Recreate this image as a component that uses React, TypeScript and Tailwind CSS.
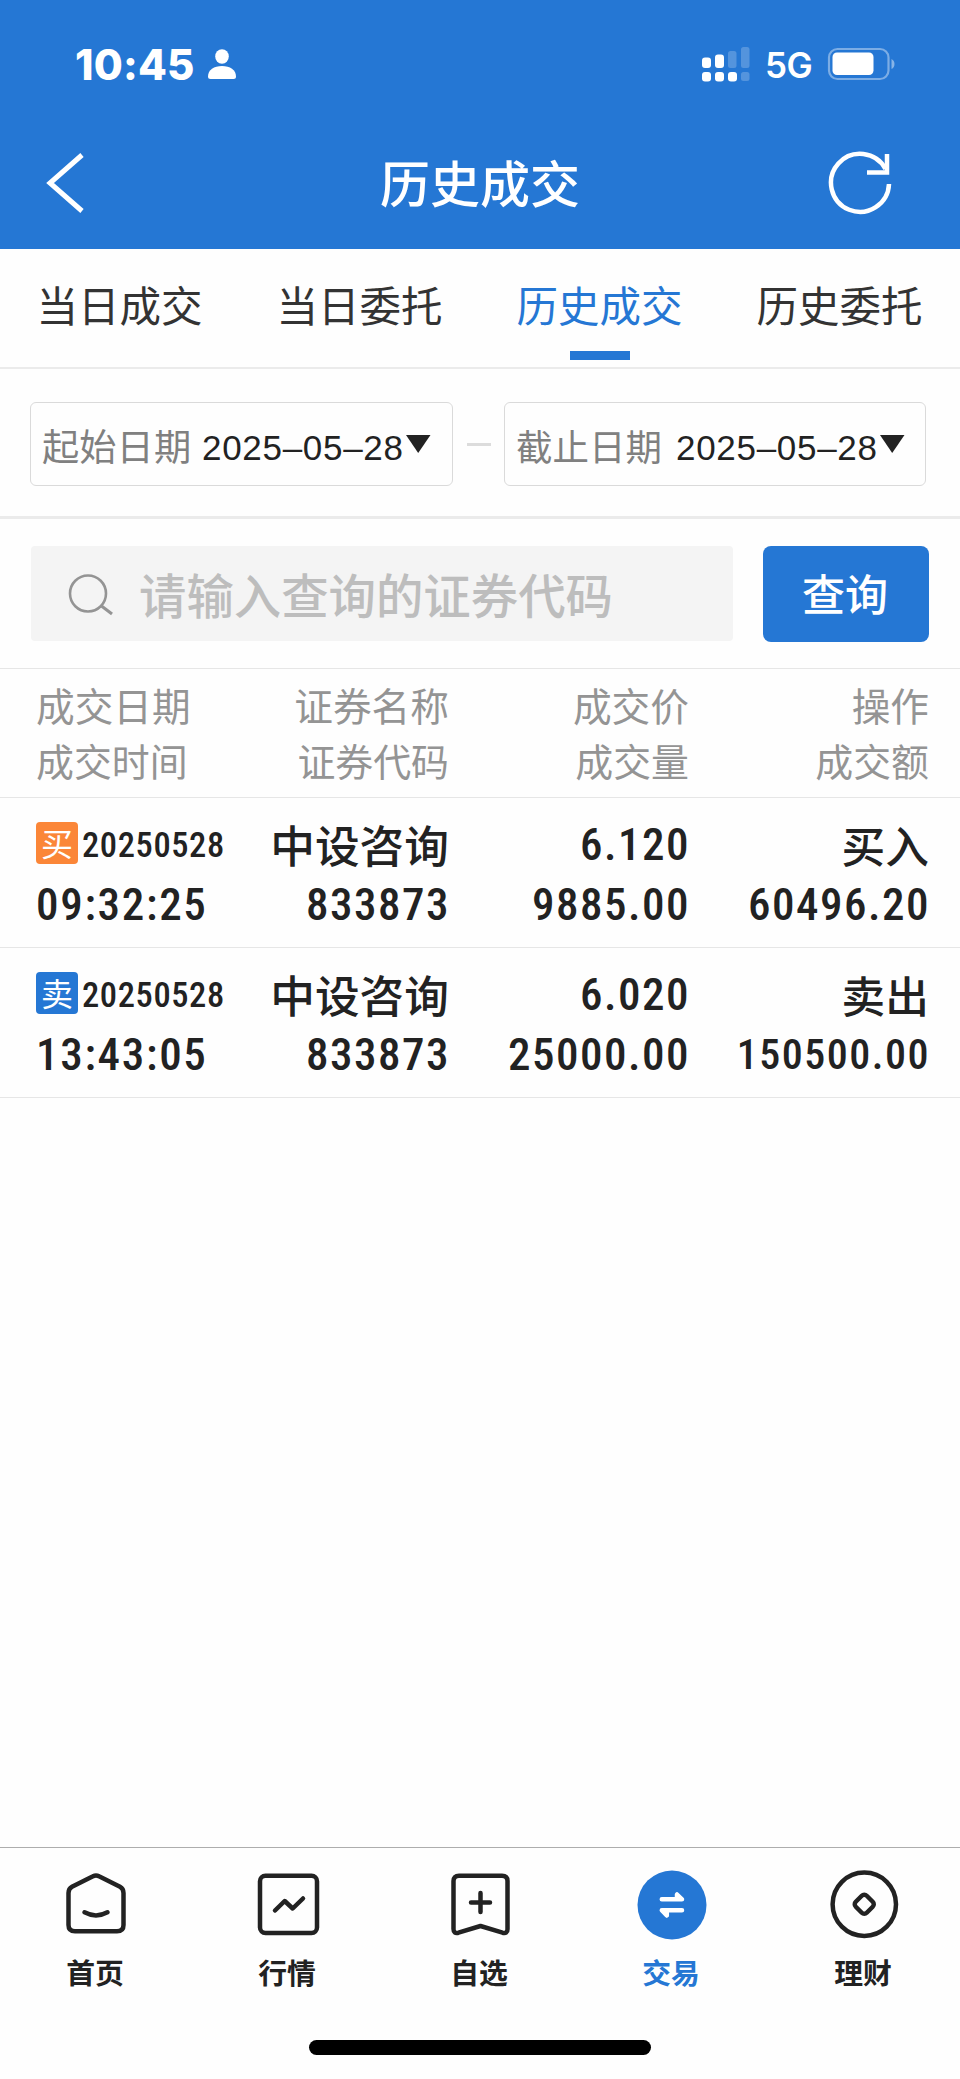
import React, { useState } from 'react';

const tabs = ['当日成交', '当日委托', '历史成交', '历史委托'];

const trades = [
  { side: 'buy', date: '20250528', time: '09:32:25', name: '中设咨询', code: '833873', price: '6.120', volume: '9885.00', amount: '60496.20' },
  { side: 'sell', date: '20250528', time: '13:43:05', name: '中设咨询', code: '833873', price: '6.020', volume: '25000.00', amount: '150500.00' },
];

const StatusBar = () => (
  <div className="h-[128px] flex items-center justify-between pl-[75px] pr-[64px]">
    <div className="flex items-center">
      <span className="w-[132px] mt-[1px] font-['Inter'] font-extrabold text-[42px] leading-none tracking-[0.2px]">10:45</span>
      <svg width="30" height="32" viewBox="0 0 30 32" fill="currentColor">
        <ellipse cx="15" cy="8.500" rx="6.800" ry="7.300" />
        <path d="M1 28.500C1 22 7 18 15 18s14 4 14 10.500Q29 31 26.500 31H3.500Q1 31 1 28.500Z" />
      </svg>
    </div>
    <div className="flex items-center">
      <svg width="50" height="36" viewBox="0 0 50 36" fill="currentColor">
        <rect x="1" y="11.500" width="9" height="10.500" rx="3" />
        <rect x="14" y="8.500" width="9" height="13.500" rx="3" />
        <rect x="27" y="5" width="8.500" height="17" rx="2.500" opacity=".22" />
        <rect x="40" y="1" width="8.500" height="21" rx="2.500" opacity=".22" />
        <rect x="1" y="26" width="9" height="9.500" rx="3" />
        <rect x="14" y="26" width="9" height="9.500" rx="3" />
        <rect x="27" y="26" width="9" height="9.500" rx="3" />
        <rect x="40" y="26" width="8.500" height="9" rx="2.500" opacity=".22" />
      </svg>
      <span className="ml-[14px] mt-[2px] w-[47px] font-['Inter'] font-semibold text-[35px] leading-none tracking-[-0.5px]">5G</span>
      <svg className="ml-[15px]" width="69" height="34" viewBox="0 0 69 34" fill="none">
        <rect x="2" y="2" width="59.500" height="30" rx="8.500" stroke="white" strokeOpacity=".4" strokeWidth="2.200" />
        <rect x="5.500" y="5.500" width="41" height="22.500" rx="4.500" fill="white" />
        <path d="M64.500 12q3 1.500 3 5t-3 5Z" fill="white" fillOpacity=".45" />
      </svg>
    </div>
  </div>
);

const NavBar = () => (
  <div className="h-[121px] grid grid-cols-3 items-start px-[44px]">
    <button className="mt-[24px] justify-self-start">
      <svg width="44" height="62" viewBox="0 0 44 62" fill="none" stroke="currentColor" strokeWidth="5">
        <path d="M38 3L6 31L38 59" />
      </svg>
    </button>
    <h1 className="mt-[19px] text-center font-medium text-[50px] leading-[68px]">历史成交</h1>
    <button className="mt-[21px] mr-[23px] justify-self-end">
      <svg width="68" height="68" viewBox="0 0 68 68" fill="none" stroke="currentColor" strokeWidth="4.500">
        <path d="M64 35A29 29 0 1 1 60.500 20" />
        <path d="M62 5V23.500H42" />
      </svg>
    </button>
  </div>
);

const DateField = ({ label, labelClass, value }: any) => (
  <button className="h-[84px] rounded-[6px] border border-[#dadada] flex items-center pl-[11px] whitespace-nowrap">
    <span className={labelClass}>{label}</span>
    <span className="mt-[7px] font-['Liberation_Sans',sans-serif] text-[35px] leading-none tracking-[0.7px] text-[#222]">{value}</span>
    <svg className="ml-[2px] -mt-[1px]" width="25" height="18" viewBox="0 0 25 18"><path d="M0 0H24.500L12.200 18Z" fill="#222" /></svg>
  </button>
);

const SearchRow = () => (
  <div className="h-[150px] border-b border-[#e6e6e6] flex items-start pt-[27px] pl-[31px] pr-[31px]">
    <div className="w-[702px] h-[95px] bg-[#f4f4f4] rounded-[4px] flex items-center pl-[37px]">
      <svg className="shrink-0 mt-[2px]" width="46" height="44" viewBox="0 0 46 44" fill="none" stroke="#949494" strokeWidth="2.600">
        <circle cx="20" cy="20.500" r="18" />
        <path d="M33.500 33L44 41" strokeWidth="3" />
      </svg>
      <input
        className="ml-[25px] w-[560px] h-[80px] bg-transparent outline-none font-medium text-[47.400px] text-[#333] placeholder:text-[#bdbdbd] placeholder:opacity-100"
        placeholder="请输入查询的证券代码"
      />
    </div>
    <button className="ml-[30px] w-[166px] h-[96px] pb-[3px] pr-[2px] rounded-[8px] bg-[#2577d4] text-white font-medium text-[43px] leading-none">查询</button>
  </div>
);

const TableHead = () => (
  <div className="h-[129px] border-b border-[#e6e6e6] pt-[8px] pl-[36px] pr-[31px] text-[#949494]">
    <div className="grid grid-cols-[190px_223px_240px_240px] text-right text-[38.700px] leading-[55px]">
      <span className="text-left">成交日期</span>
      <span>证券名称</span>
      <span>成交价</span>
      <span>操作</span>
    </div>
    <div className="grid grid-cols-[190px_223px_240px_240px] text-right text-[37.900px] leading-[55px]">
      <span className="text-left">成交时间</span>
      <span>证券代码</span>
      <span>成交量</span>
      <span>成交额</span>
    </div>
  </div>
);

const TradeRow = ({ trade }: any) => {
  const buy = trade.side === 'buy';
  return (
    <div className="h-[150px] border-b border-[#e6e6e6] pt-[17px] pl-[36px] pr-[31px] text-[#222] font-medium">
      <div className="grid grid-cols-[190px_223px_240px_240px] h-[60px] text-right leading-[60px]">
        <div className="flex items-center gap-[4px]">
          <span className={`shrink-0 w-[42px] h-[42px] -mt-[4px] pb-[2px] rounded-[4px] flex items-center justify-center text-white font-normal text-[32px] leading-none ${buy ? 'bg-[#fb8638]' : 'bg-[#2577d4]'}`}>
            {buy ? '买' : '卖'}
          </span>
          <span className="font-['Roboto'] [font-stretch:75%] text-[34.500px] tracking-[0.600px]">{trade.date}</span>
        </div>
        <span className="text-[44.700px] -mt-[1px]">{trade.name}</span>
        <span className="font-['Roboto'] [font-stretch:75%] text-[45px] tracking-[1.500px] -mr-[1px]">{trade.price}</span>
        <span className="text-[43.700px] -mt-[1px]">{buy ? '买入' : '卖出'}</span>
      </div>
      <div className="grid grid-cols-[190px_223px_240px_240px] h-[60px] text-right leading-[60px] font-['Roboto'] [font-stretch:75%] text-[45px] tracking-[1.500px]">
        <span className="text-left tracking-[1.700px]">{trade.time}</span>
        <span className="-mr-[1px]">{trade.code}</span>
        <span className="-mr-[1px]">{trade.volume}</span>
        <span className={trade.amount.length > 8 ? '-mr-[1px] text-[42px]' : '-mr-[1px]'}>{trade.amount}</span>
      </div>
    </div>
  );
};

const navItems = [
  {
    label: '首页',
    icon: (
      <>
        <path d="M8.500 24Q8.500 19.500 12 17.700L33 7.200Q36 5.600 39 7.200L60 17.700Q63.500 19.500 63.500 24V56Q63.500 62.300 57 62.300H15Q8.500 62.300 8.500 56Z" />
        <path d="M24.500 43.300Q36 49.500 47.500 43.300" />
      </>
    ),
  },
  {
    label: '行情',
    icon: (
      <>
        <rect x="8" y="6.700" width="57" height="57.300" rx="5.500" />
        <path d="M23 41.500L32.700 32L40.700 39.500L51 29.500" />
      </>
    ),
  },
  {
    label: '自选',
    icon: (
      <>
        <path d="M9.500 12Q9.500 6.700 15 6.700H58Q63.500 6.700 63.500 12V60Q63.500 65 58.500 63.700L36.500 57L14.500 63.700Q9.500 65 9.500 60Z" />
        <path d="M27 33.500H46M36.500 24V43" />
      </>
    ),
  },
  {
    label: '交易',
    active: true,
    icon: (
      <>
        <circle cx="36" cy="36" r="34.500" fill="#2577d4" stroke="none" />
        <path d="M25.800 30.300H46L41 25.500V30" stroke="white" fill="white" />
        <path d="M46 41.300H25.800L30.800 46.500V41.600" stroke="white" fill="white" />
      </>
    ),
  },
  {
    label: '理财',
    icon: (
      <>
        <circle cx="36.300" cy="35.300" r="31.700" />
        <rect x="28.500" y="27.500" width="15.500" height="15.500" rx="3.500" transform="rotate(45 36.250 35.250)" />
      </>
    ),
  },
];

const BottomNav = () => (
  <div className="h-[232px] border-t border-[#adadad] flex flex-col items-center">
    <div className="w-full grid grid-cols-5 pt-[21px]">
      {navItems.map(item => (
        <button key={item.label} className={`flex flex-col items-center ${item.active ? 'text-[#2577d4]' : 'text-[#222]'}`}>
          <svg width="72" height="72" viewBox="0 0 72 72" fill="none" stroke="currentColor" strokeWidth="4.500" strokeLinecap="round" strokeLinejoin="round">
            {item.icon}
          </svg>
          <span className="mt-[11px] pr-[2px] font-bold text-[28.800px] leading-[40px]">{item.label}</span>
        </button>
      ))}
    </div>
    <div className="mt-[48px] w-[342px] h-[15px] rounded-full bg-black" />
  </div>
);

export default function App() {
  const [active, setActive] = useState(2);

  return (
    <div className="w-[960px] h-[2079px] flex flex-col bg-[#fefefe] font-['Noto_Sans_CJK_SC',sans-serif] overflow-hidden">
      <header className="h-[249px] bg-[#2577d4] text-white">
        <StatusBar />
        <NavBar />
      </header>

      <div className="h-[120px] grid grid-cols-4 border-b-2 border-[#ebebeb]">
        {tabs.map((tab, i) => (
          <button
            key={tab}
            onClick={() => setActive(i)}
            className={`flex flex-col items-center pt-[25px] text-[41.500px] leading-[60px] ${i === active ? 'text-[#2577d4]' : 'text-[#333]'}`}
          >
            <span className="pr-[1px]">{tab}</span>
            {i === active && <span className="mt-[17px] w-[60px] h-[9px] bg-[#2577d4]" />}
          </button>
        ))}
      </div>

      {/* Date range */}
      <div className="h-[150px] border-b-3 border-[#ebebeb] grid grid-cols-[423px_51px_422px] pl-[30px] pt-[33px]">
        <DateField label="起始日期" labelClass="mt-[4px] w-[160px] text-left text-[37.300px] leading-none text-[#808080]" value="2025–05–28" />
        <div className="mt-[41px] mx-auto w-[24px] h-[3px] bg-[#dcdcdc]" />
        <DateField label="截止日期" labelClass="mt-[4px] w-[160px] text-left text-[36.500px] leading-none text-[#808080]" value="2025–05–28" />
      </div>

      <SearchRow />
      <TableHead />
      <main className="flex-1">
        {trades.map(t => <TradeRow key={t.time} trade={t} />)}
      </main>
      <BottomNav />
    </div>
  );
}
